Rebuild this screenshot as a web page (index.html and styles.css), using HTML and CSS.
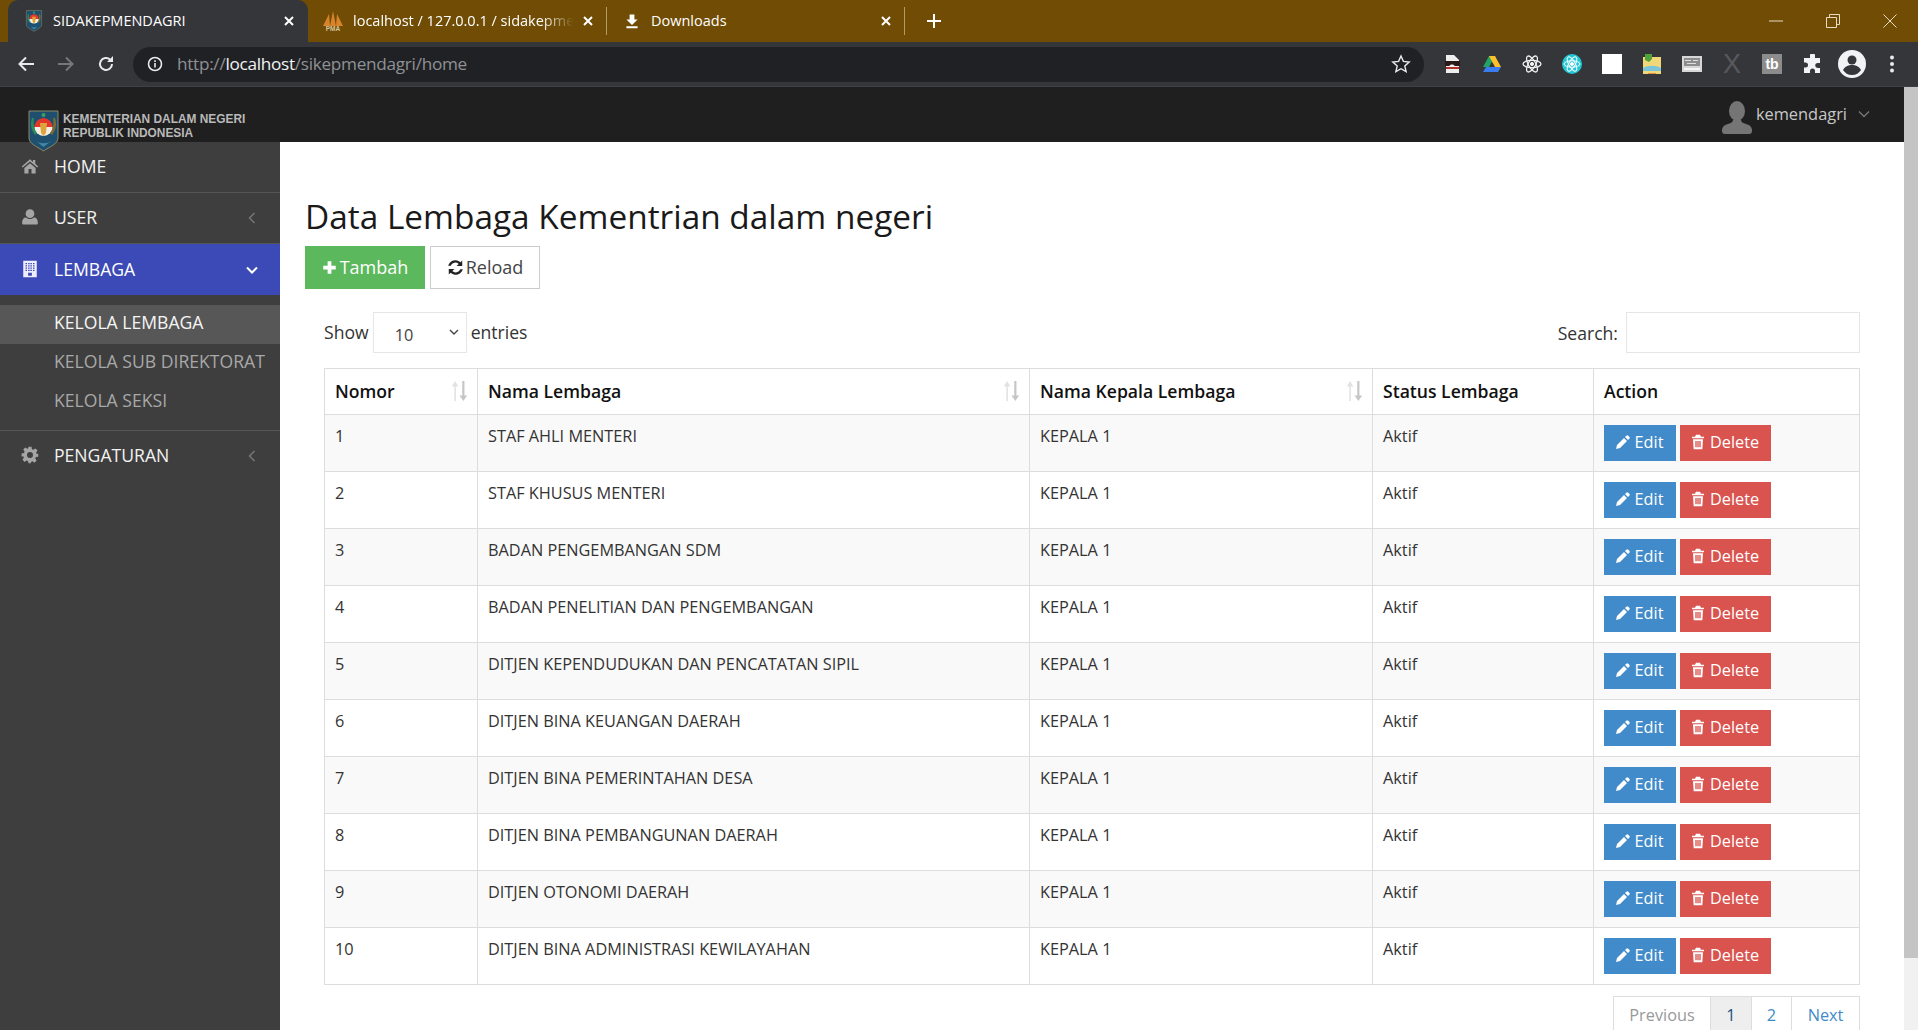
FILE: index.html
```html
<!DOCTYPE html>
<html lang="en">
<head>
  <meta charset="UTF-8" />
  <meta name="viewport" content="width=device-width, initial-scale=1.0"/>
  <title>SIDAKEPMENDAGRI</title>
  <link rel="stylesheet" href="styles.css">
</head>
<body>
  <svg class="defs" width="0" height="0">
    <symbol id="i-crest" viewBox="0 0 31 42">
      <path d="M1 1h29v27c0 6-9 9-14.500 13C10 37 1 34 1 28z" fill="#1f4f6e" stroke="#8d8a6a"/>
      <path d="M4 8c-2 6-1 12 3 17l2-2C6 19 5 13 6 8z" fill="#2c8a5a"/>
      <path d="M27 8c2 6 1 12-3 17l-2-2c3-4 4-10 3-15z" fill="#7d6a32"/>
      <circle cx="15.500" cy="5" r="2" fill="#39a06a"/>
      <path d="M6.500 17a9 9 0 0 1 18 0z" fill="#e2372a"/>
      <path d="M6.500 17a9 9 0 0 0 18 0z" fill="#f3efe6"/>
      <path d="M12 13h7l-1 10-2.500 3-2.500-3z" fill="#e0a53a"/>
      <path d="M8 31c4 3 11 3 15 0l-7.500 6z" fill="#3f88a8"/>
    </symbol>
    <symbol id="i-home" viewBox="0 0 24 24">
      <path d="M12 3 1 12.500l1.300 1.500L12 6l9.700 8 1.300-1.500L19 9V4h-3v2.500zM4.500 14.500V22H10v-6h4v6h5.500v-7.500L12 8.200z"/>
    </symbol>
    <symbol id="i-user" viewBox="0 0 24 24">
      <circle cx="12" cy="7.500" r="5.800"/>
      <path d="M3 22c-1 0-1.500-.7-1.500-2 0-4 1.500-7.500 5-7.500 1.300 1.200 3.300 2 5.500 2s4.200-.8 5.500-2c3.500 0 5 3.500 5 7.500 0 1.300-.5 2-1.500 2z"/>
    </symbol>
    <symbol id="i-building" viewBox="0 0 24 24">
      <path fill-rule="evenodd" d="M3 1h18v22H3zM6 4v1.500h2V4zm3.500 0v1.500h2V4zm3 0v1.500h2V4zm3.500 0v1.500h2V4zM6 7v1.500h2V7zm3.500 0v1.500h2V7zm3 0v1.500h2V7zm3.500 0v1.500h2V7zM6 10v1.500h2V10zm3.500 0v1.500h2V10zm3 0v1.500h2V10zm3.500 0v1.500h2V10zM6 13v1.500h2V13zm3.500 0v1.500h2V13zm3 0v1.500h2V13zm3.500 0v1.500h2V13zM9.500 17v4h5v-4z"/>
    </symbol>
    <symbol id="i-cog" viewBox="0 0 24 24">
      <path fill-rule="evenodd" d="M10 1h4l.6 3.200 1.900.8 2.700-1.800 2.800 2.800-1.800 2.700.8 1.900L23 10.200v4l-3.200.6-.8 1.900 1.800 2.700-2.800 2.800-2.700-1.800-1.900.8L13 23h-3l-.6-2.800-1.900-.8-2.700 1.800-2.800-2.800 1.800-2.700-.8-1.900L.8 14v-4L4 9.400l.8-1.900L3 4.800 5.800 2l2.700 1.800 1-.6zM12 8a4 4 0 1 0 0 8 4 4 0 0 0 0-8z"/>
    </symbol>
    <symbol id="i-plus" viewBox="0 0 24 24">
      <path d="M9 2h6v7h7v6h-7v7H9v-7H2V9h7z"/>
    </symbol>
    <symbol id="i-refresh" viewBox="0 0 24 24">
      <path d="M21.500 2v8h-8l3-3a7 7 0 0 0-11.300 2.500H1.700A10.500 10.500 0 0 1 19 4.500zM2.500 22v-8h8l-3 3a7 7 0 0 0 11.300-2.500h3.500A10.500 10.500 0 0 1 5 19.500z"/>
    </symbol>
    <symbol id="i-pencil" viewBox="0 0 24 24">
      <path d="M17 2.500a2 2 0 0 1 2.800 0l1.700 1.700a2 2 0 0 1 0 2.800L19.500 9 15 4.500zM13.500 6 18 10.500 7.500 21 1.500 22.500 3 16.500z"/>
    </symbol>
    <symbol id="i-trash" viewBox="0 0 24 24">
      <path fill-rule="evenodd" d="M9 1h6l1.500 3H21v2.500H3V4h4.500zM4.500 8h15l-1 15h-13zM8 10.500V20h2v-9.500zm3 0V20h2v-9.500zm3 0V20h2v-9.500z"/>
    </symbol>
    <symbol id="i-sort" viewBox="1 0 16 20">
      <path d="M5 1 2 6h2.300v13h1.400V6H8z" fill="#e2e2e2"/>
      <path d="M11.500 1v13H9l3.500 5 3.500-5h-2.500V1z" fill="#c6c6c6"/>
    </symbol>
    <symbol id="i-close" viewBox="0 0 12 12">
      <path d="M2 2l8 8M10 2l-8 8" fill="none" stroke="#fff" stroke-width="2"/>
    </symbol>
  </svg>

  <div class="tabstrip">
    <div class="tab tab-active">
      <svg class="favicon"><use href="#i-crest"/></svg>
      <span class="tab-title">SIDAKEPMENDAGRI</span>
      <svg class="tab-close"><use href="#i-close"/></svg>
    </div>
    <div class="tab tab-pma">
      <svg class="favicon" viewBox="0 0 20 20">
        <path d="M0 15 6 3l1 12zM7 15l3-15 3 15zM13 15l1-12 6 12z" fill="#d9842a"/>
        <text x="10" y="20" class="pma-label">PMA</text>
      </svg>
      <span class="tab-title tab-fade">localhost / 127.0.0.1 / sidakepmendagri</span>
      <svg class="tab-close"><use href="#i-close"/></svg>
    </div>
    <div class="tab tab-dl">
      <svg class="favicon" viewBox="0 0 20 20"><path d="M7 2h6v6h4l-7 7-7-7h4zM3 16.500h14V19H3z" fill="#fff"/></svg>
      <span class="tab-title">Downloads</span>
      <svg class="tab-close"><use href="#i-close"/></svg>
    </div>
    <svg class="new-tab" viewBox="0 0 16 16"><path d="M8 1v14M1 8h14" stroke="#fff" stroke-width="2"/></svg>
    <div class="window-btns">
      <svg viewBox="0 0 14 14"><path d="M0 7h14" stroke="#e8dcc2"/></svg>
      <svg viewBox="0 0 14 14"><path d="M.5 3.500h10v10H.5zM3.500 3.500v-3h10v10h-3" fill="none" stroke="#e8dcc2"/></svg>
      <svg viewBox="0 0 14 14"><path d="M.5.5l13 13M13.500.5l-13 13" stroke="#e8dcc2"/></svg>
    </div>
  </div>

  <div class="toolbar">
    <div class="nav-btns">
      <svg viewBox="0 0 18 18"><path d="M17 9H3M9 2.500 2.500 9 9 15.500" fill="none" stroke="#e8eaed" stroke-width="2"/></svg>
      <svg viewBox="0 0 18 18"><path d="M1 9h14M9 2.500 15.500 9 9 15.500" fill="none" stroke="#75777a" stroke-width="2"/></svg>
      <svg viewBox="0 0 18 18"><path d="M15 9a6 6 0 1 1-1.800-4.300" fill="none" stroke="#e8eaed" stroke-width="2"/><path d="M16 1v6h-6z" fill="#e8eaed"/></svg>
    </div>
    <div class="omnibox">
      <svg class="site-info" viewBox="0 0 16 16"><circle cx="8" cy="8" r="6.500" fill="none" stroke="#e8eaed" stroke-width="1.600"/><path d="M7.200 7h1.600v4.500H7.200zM7.200 4.300h1.600v1.600H7.200z" fill="#e8eaed"/></svg>
      <span class="url">http://<b>localhost</b>/sikepmendagri/home</span>
      <svg class="star" viewBox="0 0 20 20"><path d="M10 2l2.400 5.400 5.800.6-4.400 3.900 1.300 5.800L10 14.700l-5.100 3 1.300-5.800L1.800 8l5.800-.6z" fill="none" stroke="#e8eaed" stroke-width="1.400"/></svg>
    </div>
    <div class="extensions">
      <svg viewBox="0 0 20 20"><path d="M4 1h8l5 5v13H4z" fill="#eee"/><path d="M3 7h15v5h-5l-2-1.500h-2L7 12H3z" fill="#2a1a1a"/><path d="M4 13h13v2H4z" fill="#b3312c"/></svg>
      <svg viewBox="0 0 20 20"><path d="M7 2h6l-6 11H1z" fill="#21a464"/><path d="M7 2h6l6 11h-6z" fill="#fbc02d"/><path d="M1 18l3-5h15l-3 5z" fill="#3a7df0"/></svg>
      <svg viewBox="0 0 20 20" fill="none" stroke="#f1f1f1"><ellipse cx="10" cy="10" rx="9" ry="3.600" stroke-width="1.300"/><ellipse cx="10" cy="10" rx="9" ry="3.600" stroke-width="1.300" transform="rotate(60 10 10)"/><ellipse cx="10" cy="10" rx="9" ry="3.600" stroke-width="1.300" transform="rotate(120 10 10)"/><circle cx="10" cy="10" r="1.600" fill="#f1f1f1"/></svg>
      <svg viewBox="0 0 20 20" fill="none" stroke="#fff"><circle cx="10" cy="10" r="10" fill="#1fc8d6" stroke="none"/><ellipse cx="10" cy="10" rx="8" ry="3.200"/><ellipse cx="10" cy="10" rx="8" ry="3.200" transform="rotate(60 10 10)"/><ellipse cx="10" cy="10" rx="8" ry="3.200" transform="rotate(120 10 10)"/><circle cx="10" cy="10" r="1.500" fill="#fff"/></svg>
      <span class="ext-white"></span>
      <svg viewBox="0 0 20 20"><path d="M1 3h18v17H1z" fill="#f0d878"/><path d="M1 14c5-3 13-3 18 0v3H1z" fill="#7cc4d8"/><path d="M6 19h8v1H6z" fill="#e58b3a"/><path d="M3 0h7v5l-3 3-4-2z" fill="#4fa33a"/></svg>
      <svg viewBox="0 0 20 20"><path d="M0 2h20v16H0z" fill="#d7d7d7"/><path d="M2 4h16v8H2z" fill="#8d8d8d"/><path d="M3 6h6v1H3zM11 6h5v1h-5zM5 9h9v1H5z" fill="#dedede"/><path d="M2 14h16v2H2z" fill="#f4f4f4"/></svg>
      <span class="ext-x">X</span>
      <span class="ext-tb">tb</span>
      <svg viewBox="0 0 20 20"><path d="M8 1.500a2.500 2.500 0 0 1 5 0V4h5v5h-2.300a2.500 2.500 0 0 0 0 5H18v5h-5v-2a2.500 2.500 0 0 0-5 0v2H2v-5.500h1.500a2.500 2.500 0 0 0 0-5H2V4h6z" fill="#f1f3f4"/></svg>
      <svg class="ext-avatar" viewBox="0 0 28 28"><circle cx="14" cy="14" r="14" fill="#f1f3f4"/><circle cx="14" cy="10" r="4.500" fill="#35363a"/><path d="M5 20c2-4 6-5 9-5s7 1 9 5c-2 3-5 5-9 5s-7-2-9-5z" fill="#35363a"/></svg>
      <svg class="ext-dots" viewBox="0 0 6 20"><circle cx="3" cy="3.500" r="2" fill="#e8eaed"/><circle cx="3" cy="10" r="2" fill="#e8eaed"/><circle cx="3" cy="16.500" r="2" fill="#e8eaed"/></svg>
    </div>
  </div>

  <div class="page">
    <div class="page-body">
      <header class="topbar">
        <div class="logo">
          <svg class="logo-crest"><use href="#i-crest"/></svg>
          <div class="logo-text">KEMENTERIAN DALAM NEGERI<br>REPUBLIK INDONESIA</div>
        </div>
        <div class="user-menu">
          <svg class="user-pic" viewBox="0 0 30 34"><ellipse cx="15" cy="10" rx="8" ry="10"/><path d="M3 33c-2 0-3-1-3-3 0-4 2-6 6-7 3-1 5-2 5-4h8c0 2 2 3 5 4 4 1 6 3 6 7 0 2-1 3-3 3z"/></svg>
          <span>kemendagri</span>
          <svg class="user-caret" viewBox="0 0 12 8"><path d="M1 1.500l5 5 5-5" fill="none" stroke="#777" stroke-width="1.300"/></svg>
        </div>
      </header>

      <div class="layout">
        <aside class="sidebar">
          <a class="nav-item">
            <svg class="nav-icon"><use href="#i-home"/></svg>HOME
          </a>
          <a class="nav-item">
            <svg class="nav-icon"><use href="#i-user"/></svg>USER
            <svg class="nav-caret" viewBox="0 0 8 12"><path d="M6.500 1 1.500 6l5 5" fill="none" stroke="#777" stroke-width="1.500"/></svg>
          </a>
          <a class="nav-item nav-open">
            <svg class="nav-icon"><use href="#i-building"/></svg>LEMBAGA
            <svg class="nav-caret-down" viewBox="0 0 12 8"><path d="M1 1.500l5 5 5-5" fill="none" stroke="#fff" stroke-width="2"/></svg>
          </a>
          <div class="subnav">
            <a class="sub-item sub-active">KELOLA LEMBAGA</a>
            <a class="sub-item">KELOLA SUB DIREKTORAT</a>
            <a class="sub-item">KELOLA SEKSI</a>
          </div>
          <a class="nav-item nav-last">
            <svg class="nav-icon"><use href="#i-cog"/></svg>PENGATURAN
            <svg class="nav-caret" viewBox="0 0 8 12"><path d="M6.500 1 1.500 6l5 5" fill="none" stroke="#777" stroke-width="1.500"/></svg>
          </a>
        </aside>

        <main class="content">
          <h1>Data Lembaga Kementrian dalam negeri</h1>
          <div class="actions">
            <button class="btn btn-add"><svg class="ic"><use href="#i-plus"/></svg>Tambah</button>
            <button class="btn btn-reload"><svg class="ic"><use href="#i-refresh"/></svg>Reload</button>
          </div>

          <div class="data-wrap">
            <div class="table-controls">
              <label class="length">Show <select><option>10</option></select> entries</label>
              <label class="search">Search: <input type="text"></label>
            </div>

            <table class="data-table">
              <colgroup>
                <col class="c-no"><col class="c-name"><col class="c-head"><col class="c-status"><col class="c-action">
              </colgroup>
              <thead>
                <tr>
                  <th><div class="th-in">Nomor<svg class="sort"><use href="#i-sort"/></svg></div></th>
                  <th><div class="th-in">Nama Lembaga<svg class="sort"><use href="#i-sort"/></svg></div></th>
                  <th><div class="th-in">Nama Kepala Lembaga<svg class="sort"><use href="#i-sort"/></svg></div></th>
                  <th>Status Lembaga</th>
                  <th>Action</th>
                </tr>
              </thead>
              <tbody id="rows"></tbody>
            </table>

            <div class="table-footer">
              <div class="table-info">Showing 1 to 10 of 20 entries</div>
              <ul class="pager">
                <li class="pg-prev">Previous</li>
                <li class="pg-cur">1</li>
                <li class="pg-two">2</li>
                <li class="pg-next">Next</li>
              </ul>
            </div>
          </div>
        </main>
      </div>
    </div>
    <div class="scrollbar"><div class="thumb"></div></div>
  </div>

  <script src="app.js"></script>
</body>
</html>
```

FILE: styles.css
```css
* {
  margin: 0;
  padding: 0;
  box-sizing: border-box;
}

html, body {
  height: 100%;
  overflow: hidden;
}

body {
  display: flex;
  flex-direction: column;
  font-family: "Open Sans", sans-serif;
  font-size: 16.300px;
  line-height: 22px;
  color: #333;
  background: #fff;
}

.defs {
  position: absolute;
}

/* browser chrome */
.tabstrip {
  height: 42px;
  flex: none;
  display: flex;
  align-items: center;
  background: #704c04;
  color: #fff;
  font-size: 14.500px;
}

.tab {
  height: 42px;
  display: flex;
  align-items: center;
  position: relative;
}

.tab-active {
  width: 300px;
  margin-left: 8px;
  padding: 0 13px 0 17px;
  background: #35363a;
  border-radius: 10px 10px 0 0;
}

.tab-pma {
  width: 299px;
  padding: 0 12px 0 15px;
  border-right: 1px solid #b69a66;
  height: 28px;
}

.tab-dl {
  width: 298px;
  padding: 0 12px 0 17px;
  border-right: 1px solid #b69a66;
  height: 28px;
}

.favicon {
  width: 20px;
  height: 20px;
  flex: none;
}

.tab-active .favicon {
  width: 18px;
  height: 22px;
}

.tab-dl .favicon {
  width: 16px;
  height: 16px;
}

.tab-dl .tab-title {
  margin-left: 11px;
}

.pma-label {
  font-family: "Liberation Sans", sans-serif;
  font-size: 6.500px;
  font-weight: bold;
  text-anchor: middle;
  fill: #d8c49a;
}

.tab-title {
  flex: 1;
  min-width: 0;
  margin-left: 10px;
  white-space: nowrap;
  overflow: hidden;
}

.tab-fade {
  -webkit-mask-image: linear-gradient(to right, #000 85%, transparent 100%);
  mask-image: linear-gradient(to right, #000 85%, transparent 100%);
}

.tab-close {
  width: 12px;
  height: 12px;
  flex: none;
  margin-left: 8px;
}

.new-tab {
  width: 16px;
  height: 16px;
  margin-left: 21px;
}

.window-btns {
  margin-left: auto;
  display: flex;
  gap: 43px;
  padding-right: 21px;
}

.window-btns svg {
  width: 14px;
  height: 14px;
}

.toolbar {
  height: 45px;
  flex: none;
  display: flex;
  align-items: center;
  background: #35363a;
  border-bottom: 1px solid #3f4044;
}

.nav-btns {
  width: 133px;
  flex: none;
  display: flex;
  align-items: center;
  gap: 22px;
  padding-left: 17px;
}

.nav-btns svg {
  width: 18px;
  height: 18px;
}

.omnibox {
  width: 1291px;
  height: 35px;
  flex: none;
  display: flex;
  align-items: center;
  padding: 0 13px 0 14px;
  background: #202124;
  border-radius: 18px;
}

.site-info {
  width: 16px;
  height: 16px;
  flex: none;
}

.url {
  margin-left: 14px;
  color: #8f9195;
  font-size: 17.200px;
  letter-spacing: -0.29px;
}

.url b {
  font-weight: 400;
  color: #f1f3f4;
}

.star {
  width: 20px;
  height: 20px;
  margin-left: auto;
}

.extensions {
  flex: 1;
  display: flex;
  align-items: center;
  gap: 20px;
  padding-left: 18px;
}

.extensions > * {
  width: 20px;
  height: 20px;
  flex: none;
}

.ext-white {
  background: #fff;
}

.ext-x {
  font-family: "Liberation Sans", sans-serif;
  font-size: 27px;
  line-height: 20px;
  text-align: center;
  color: #58595d;
}

.ext-tb {
  background: #8c8c8c;
  color: #fff;
  font-family: "Liberation Sans", sans-serif;
  font-size: 14px;
  font-weight: bold;
  line-height: 20px;
  text-align: center;
}

.extensions .ext-avatar {
  width: 28px;
  height: 28px;
  margin: 0 -4px;
}

.extensions .ext-dots {
  width: 6px;
  margin-left: 7px;
}

/* page */
.page {
  flex: 1;
  min-height: 0;
  display: flex;
}

.page-body {
  flex: 1;
  min-width: 0;
  display: flex;
  flex-direction: column;
}

.scrollbar {
  width: 14px;
  flex: none;
  background: #f1f1f1;
}

.thumb {
  height: 871px;
  background: #c4c4c4;
}

.topbar {
  height: 55px;
  flex: none;
  display: flex;
  justify-content: space-between;
  background: #1f1f1f;
  position: relative;
  z-index: 1;
}

.logo {
  height: 42px;
  display: flex;
  margin: 23px 0 0 28px;
}

.logo-crest {
  width: 31px;
  height: 42px;
}

.logo-text {
  margin: 3px 0 0 4px;
  font-family: "Liberation Sans", sans-serif;
  font-size: 11.900px;
  font-weight: bold;
  line-height: 13.500px;
  color: #b9b9b9;
}

.user-menu {
  display: flex;
  align-items: center;
  padding: 0 34px 1px 0;
  color: #c8c8c8;
  font-size: 16.400px;
}

.user-pic {
  width: 30px;
  height: 34px;
  margin: 7px 4px 0 0;
  fill: #757575;
}

.user-caret {
  width: 12px;
  height: 8px;
  margin-left: 11px;
}

.layout {
  flex: 1;
  min-height: 0;
  display: flex;
}

/* sidebar */
.sidebar {
  width: 280px;
  flex: none;
  background: #3e3e3e;
  font-size: 17.600px;
}

.nav-item {
  height: 51px;
  display: flex;
  align-items: center;
  padding-bottom: 2px;
  border-bottom: 1px solid #555;
  color: #f2f2f2;
}

.nav-open {
  background: #3b4ab6;
  color: #fff;
  border-bottom: 0;
}

.nav-last {
  padding-bottom: 4px;
  border-bottom: 0;
}

.nav-icon {
  width: 18px;
  height: 18px;
  margin: 0 15px 0 21px;
  fill: #a5a5a5;
  flex: none;
}

.nav-open .nav-icon {
  fill: #eef;
}

.nav-caret {
  width: 8px;
  height: 12px;
  margin: 2px 24px 0 auto;
}

.nav-caret-down {
  width: 12px;
  height: 8px;
  margin: 2px 22px 0 auto;
}

.subnav {
  padding: 10px 0 8px;
  border-bottom: 1px solid #555;
}

.sub-item {
  height: 39px;
  display: block;
  padding-left: 54px;
  line-height: 35px;
  color: #a8a8a8;
}

.sub-active {
  background: #575757;
  color: #f5f5f5;
}

/* content */
.content {
  flex: 1;
  min-width: 0;
  padding: 54px 25px 0;
  overflow: hidden;
}

h1 {
  font-size: 33.400px;
  font-weight: 400;
  line-height: 40px;
  color: #1a1a1a;
  margin-bottom: 10px;
}

.actions {
  display: flex;
  gap: 5px;
}

.btn {
  display: flex;
  align-items: center;
  justify-content: center;
  height: 43px;
  padding-bottom: 1px;
  border: 0;
  font-family: inherit;
  font-size: 18px;
  cursor: pointer;
}

.btn .ic {
  width: 15px;
  height: 15px;
  margin-right: 3px;
  fill: currentColor;
}

.btn-add {
  width: 120px;
  background: #5cb85c;
  color: #fff;
}

.btn-reload {
  width: 110px;
  background: #fff;
  color: #444;
  border: 1px solid #ccc;
}

.btn-reload .ic {
  width: 17px;
  height: 17px;
  margin-right: 2px;
  fill: #222;
}

.data-wrap {
  padding: 23px 19px 0;
}

.table-controls {
  display: flex;
  justify-content: space-between;
  height: 41px;
  margin-bottom: 15px;
  font-size: 17.600px;
}

.length, .search {
  display: flex;
  align-items: center;
  gap: 4px;
}

.length {
  padding-bottom: 1px;
}

.search {
  gap: 8px;
}

select, .search input {
  height: 41px;
  border: 1px solid #e6e6e6;
  background: #fff;
  font-family: inherit;
  font-size: 16.300px;
  color: #444;
  outline: none;
}

select {
  width: 94px;
  padding: 5px 0 0 21px;
  appearance: none;
  background-image: url("data:image/svg+xml,%3Csvg xmlns='http://www.w3.org/2000/svg' viewBox='0 0 10 6'%3E%3Cpath d='M1 1l4 4 4-4' fill='none' stroke='%23444' stroke-width='1.400'/%3E%3C/svg%3E");
  background-repeat: no-repeat;
  background-size: 10px 6px;
  background-position: right 7px center;
}

.search input {
  width: 234px;
}

.data-table {
  width: 100%;
  table-layout: fixed;
  border-collapse: collapse;
  border: 1px solid #ddd;
}

.c-no { width: 153px; }
.c-name { width: 552px; }
.c-head { width: 343px; }
.c-status { width: 221px; }

.data-table th, .data-table td {
  border: 1px solid #ddd;
  padding: 10px;
  text-align: left;
  vertical-align: top;
}

.data-table th {
  height: 46px;
  padding: 11px 8px 11px 10px;
  color: #111;
  font-size: 17.600px;
  font-weight: 600;
}

.data-table td {
  height: 57px;
}

.data-table tbody tr:nth-child(odd) {
  background: #f9f9f9;
}

.th-in {
  display: flex;
  justify-content: space-between;
}

.sort {
  width: 19px;
  height: 22px;
}

.row-btns {
  display: flex;
  gap: 4px;
}

.row-btn {
  height: 36px;
  display: flex;
  align-items: center;
  justify-content: center;
  padding: 0 2px 3px 0;
  color: #fff;
  font-size: 16.300px;
}

.row-btn svg {
  width: 16px;
  height: 16px;
  margin-right: 4px;
  fill: currentColor;
}

.btn-edit {
  width: 72px;
  background: #428bca;
}

.btn-delete {
  width: 91px;
  background: #d9534f;
}

.table-footer {
  display: flex;
  justify-content: space-between;
  padding-top: 11px;
}

.table-info {
  padding-top: 30px;
  font-size: 17.600px;
  color: #333;
}

.pager {
  display: flex;
  list-style: none;
  height: 42px;
  border: 1px solid #ddd;
  border-width: 1px 1px 1px 0;
}

.pager li {
  padding-top: 7px;
  border-left: 1px solid #ddd;
  text-align: center;
  color: #428bca;
}

.pager .pg-prev {
  width: 97px;
  color: #999;
}

.pager .pg-cur {
  width: 41px;
  background: #eee;
  color: #23527c;
}

.pager .pg-two {
  width: 40px;
}

.pager .pg-next {
  width: 68px;
}
```

FILE: app.js
```js
// rows of the lembaga table
var lembaga = [
  "STAF AHLI MENTERI",
  "STAF KHUSUS MENTERI",
  "BADAN PENGEMBANGAN SDM",
  "BADAN PENELITIAN DAN PENGEMBANGAN",
  "DITJEN KEPENDUDUKAN DAN PENCATATAN SIPIL",
  "DITJEN BINA KEUANGAN DAERAH",
  "DITJEN BINA PEMERINTAHAN DESA",
  "DITJEN BINA PEMBANGUNAN DAERAH",
  "DITJEN OTONOMI DAERAH",
  "DITJEN BINA ADMINISTRASI KEWILAYAHAN"
];

var html = "";
lembaga.forEach(function (nama, i) {
  html += "<tr><td>" + (i + 1) + "</td><td>" + nama + "</td><td>KEPALA 1</td><td>Aktif</td>" +
    '<td><div class="row-btns">' +
    '<a class="row-btn btn-edit"><svg><use href="#i-pencil"/></svg>Edit</a>' +
    '<a class="row-btn btn-delete"><svg><use href="#i-trash"/></svg>Delete</a>' +
    "</div></td></tr>";
});
document.getElementById("rows").innerHTML = html;
```
